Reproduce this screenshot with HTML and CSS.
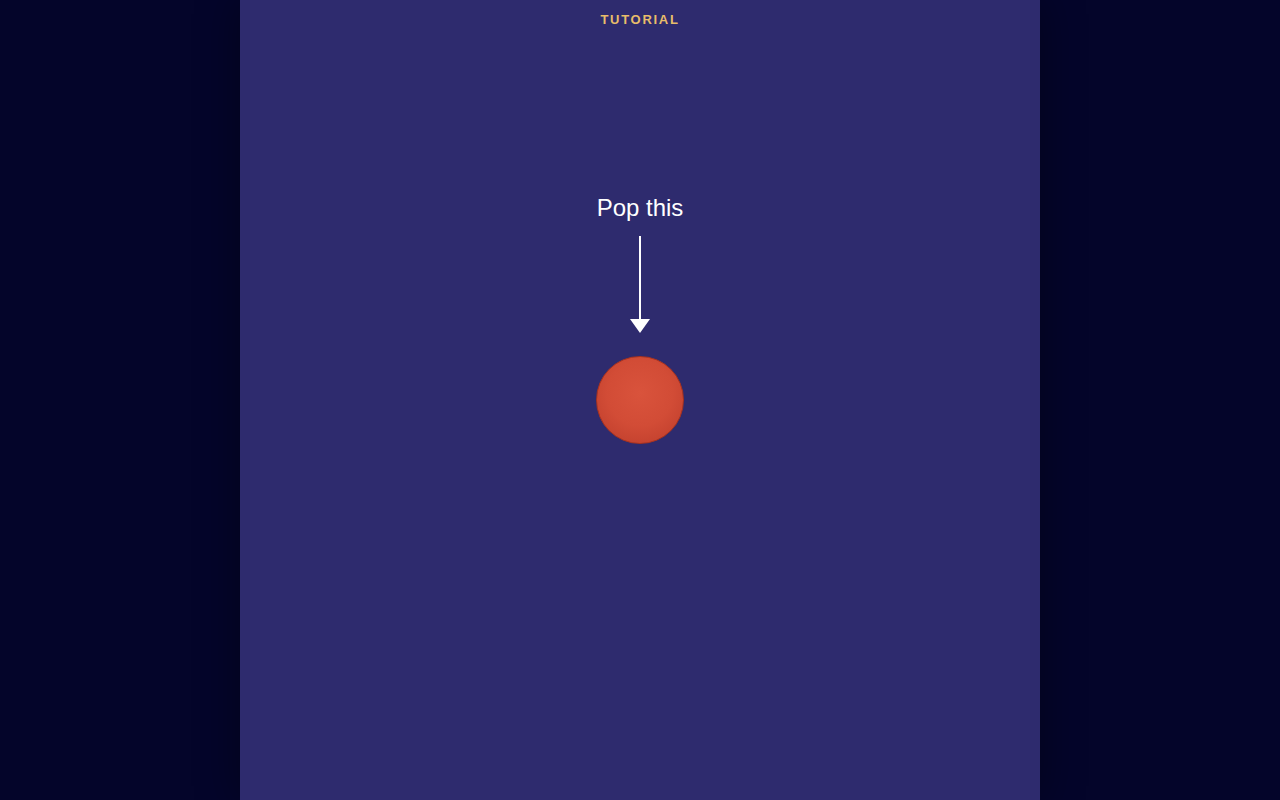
FILE: index.html
```html
<!DOCTYPE html>
<html lang="en">
<head>
    <meta charset="UTF-8">
    <meta name="viewport" content="width=device-width, initial-scale=1.0">
    <title>Balloon Pop - Tutorial</title>
    <link rel="stylesheet" href="styles.css">
</head>
<body>
    <div class="stage">
        <div class="stage-title">TUTORIAL</div>

        <div class="hint">
            <div class="hint-text">Pop this</div>
            <!-- pointer from the label down to the bubble -->
            <svg class="hint-arrow" width="20" height="98" viewBox="0 0 20 98">
                <line x1="10" y1="0" x2="10" y2="86" stroke="#ffffff" stroke-width="2"/>
                <polygon points="0,83 20,83 10,97" fill="#ffffff"/>
            </svg>
            <button class="bubble" type="button" aria-label="Pop"></button>
        </div>
    </div>
</body>
</html>
```

FILE: styles.css
```css
html, body {
    height: 100%;
}

body {
    margin: 0;
    background-color: #04052a;
    font-family: "Liberation Sans", Arial, sans-serif;
    overflow: hidden;
}

.stage {
    width: 800px;
    height: 100%;
    margin: 0 auto;
    background-color: #2e2b6e;
    box-shadow: 0 0 40px rgba(0, 0, 0, 0.35);
    display: flex;
    flex-direction: column;
    align-items: center;
}

.stage-title {
    margin-top: 12px;
    color: #e8bd6a;
    font-size: 13px;
    font-weight: bold;
    letter-spacing: 1.7px;
    line-height: 16px;
}

.hint {
    margin-top: 166px;
    display: flex;
    flex-direction: column;
    align-items: center;
}

.hint-text {
    color: #ffffff;
    font-size: 24px;
    line-height: 28px;
}

.hint-arrow {
    display: block;
    margin-top: 14px;
}

.bubble {
    width: 88px;
    height: 88px;
    margin-top: 22px;
    padding: 0;
    border: 1px solid #a8321f;
    border-radius: 50%;
    background: radial-gradient(circle at 50% 42%, #d9533c 0%, #d24c36 50%, #bb3b2a 100%);
    cursor: pointer;
}
```
